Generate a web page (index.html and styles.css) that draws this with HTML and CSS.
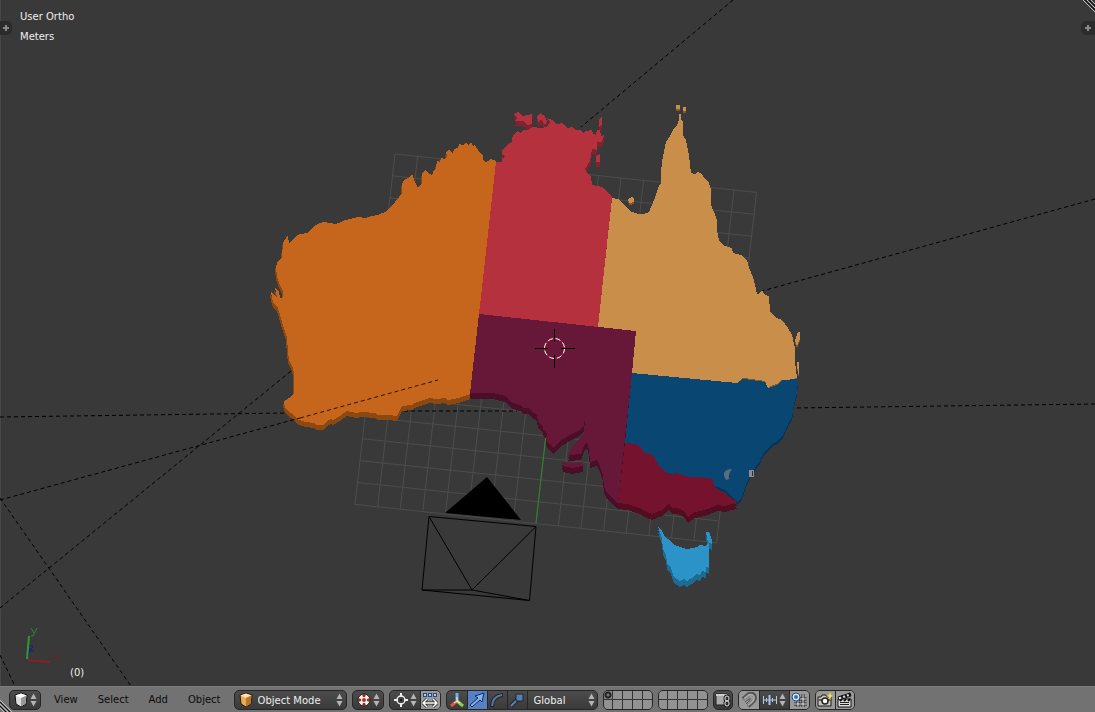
FILE: index.html
```html
<!DOCTYPE html>
<html lang="en">
<head>
    <meta charset="UTF-8">
    <meta name="viewport" content="width=device-width, initial-scale=1.0">
    <title>3D View</title>
    <link rel="stylesheet" href="styles.css">
</head>
<body>
    <svg width="0" height="0" class="defs" aria-hidden="true">
        <symbol id="updown" viewBox="0 0 7 14">
            <path d="M3.5 0.5L6.5 6H.5zM3.5 13.5L6.5 8H.5z" fill="#b4b4b4"/>
        </symbol>
    </svg>

    <main class="view">
        <svg class="scene" viewBox="0 0 1095 686" preserveAspectRatio="xMidYMid slice" role="img" aria-label="Map of Australia">
            <defs>
                <g id="wa">
                    <path d="M496 162L494 160 490 159 488 161 485 162 483 160 483 156 480 153 478 150 475 145 473 146 471 142 468 145 466 143 463 145 459 144 458 148 454 149 453 153 449 150 446 152 447 156 445 159 441 158 440 162 437 161 436 168 434 170 432 175 427 172 425 170 422 173 422 183 418 188 415 182 412 174 409 178 405 179 402 184 402 193 399 197 395 202 390 207 385 212 378 215 372 216 365 218 358 217 350 219 345 220 341 222 335 224 330 223 323 222 318 224 313 227 310 230 307 233 300 234 295 237 289 244 288 235 286 238 283 243 282 257 277 263 276 267 277 277 280 285 283 291 283 297 280 298 279 292 275 287 277 297 271 292 273 302 278 308 282 322 287 338 288 352 289 360 293 368 294 373 294 393 291 397 284 401 285 408 291 413 297 419 305 422 314 423 316 425 323 425 327 421 331 419 333 420 340 416 347 411 356 413 362 412 375 413 377 415 388 415 397 416 402 406 412 405 414 403 420 401 430 398 436 399 445 398 448 400 458 398 470 394 479 314z"/>
                </g>
                <g id="nt">
                    <path d="M496 162L502 162 502 158 505 157 502 153 502 150 505 147 508 144 512 142 512 138 514 134 517 131 521 133 523 130 528 130 533 127 540 128 547 127 550 122 547 118 552 120 557 124 562 123 567 128 572 127 576 130 580 130 583 133 586 131 592 130 593 134 596 135 597 130 600 130 601 136 604 135 602 142 597 142 597 150 592 149 590 161 585 169 588 174 591 177 592 185 602 187 607 191 612 197 598 327 479 314z"/>
                    <path d="M514 114L518 112 522 116 527 115 532 114 532 124 527 125 523 121 515 121 517 118zM537 116L540 113 543 115 545 117 547 121 545 125 541 119 538 122zM599 119L602 117 602 124 599 127zM596 156L600 154 600 162 596 162z"/>
                </g>
                <g id="qld">
                    <path d="M612 198L618 199 623 203 630 211 638 214 644 214 649 212 652 205 655 198 658 188 661 183 661 172 662 162 664 152 666 142 670 136 673 130 677 125 680 118 683 122 683 135 686 140 689 155 691 173 695 174 698 172 702 174 705 179 709 183 711 190 711 205 714 212 717 220 717 230 719 241 725 246 732 248 733 253 741 255 747 260 749 268 753 277 755 285 757 294 760 293 762 290 765 295 769 296 770 312 776 318 782 320 788 328 792 335 795 348 795 362 797 378 787 380 782 380 777 384 773 385 768 388 765 381 752 379 743 378 737 383 632 373 636 331 598 327z"/>
                    <path d="M676 105h4v4h-4zM683 107h3v4h-3zM679 114h2v6h-2zM628 199l4-2 2 1v4l-5 1zM795 340l3-8 2 0v7l-3 7zM797 362h2v10l-1 4z"/>
                </g>
                <g id="sa">
                    <path d="M479 314L636 331 632 373 618 503 612 498 607 493 604 487 603 476 600 466 597 460 590 462 589 450 587 442 584 446 581 454 568 455 572 446 578 441 584 433 585 418 584 425 578 431 570 435 560 441 554 448 548 443 546 439 547 434 543 430 543 426 538 422 537 416 534 413 528 408 523 408 520 405 513 403 505 396 493 393 470 393z"/>
                    <path d="M562 462L570 463 583 462 583 466 572 468 563 466z"/>
                </g>
                <g id="nsw">
                    <path d="M632 373L737 383 743 379 752 380 765 382 768 388 777 385 782 380 798 379 797 393 794 404 792 417 787 426 783 435 778 441 773 443 768 448 763 454 760 461 755 468 751 474 747 482 744 491 740 500 737 502 725 490 700 480 675 476 640 460 625 443z"/>
                </g>
                <g id="vic">
                    <path d="M625 443L636 444 642 448 643 452 653 455 656 461 660 467 666 472 672 475 675 473 690 477 700 477 713 479 714 487 721 491 727 495 737 502 736 503 725 506 717 505 708 509 700 511 695 512 688 517 684 511 678 508 672 508 669 503 665 507 662 510 657 512 652 514 645 511 640 508 627 504 618 503z"/>
                </g>
                <g id="tas">
                    <path d="M658 527L662 531 665 537 668 539 672 543 677 546 683 548 687 549 697 547 700 545 705 546 709 542 709 568 706 567 706 572 702 571 700 575 696 574 693 578 689 579 687 582 684 579 680 581 674 577 671 568 667 563 666 555 663 549 662 538z"/>
                    <path d="M706 532L709 532 712 540 712 544 708 542z"/>
                </g>
            </defs>

            <!-- floor grid, 16 x 16 cells -->
            <path class="grid" transform="matrix(22.6 2.4 -2.5 21.9 395 154)" d="M0 0V16M1 0V16M2 0V16M3 0V16M4 0V16M5 0V16M6 0V16M7 0V16M8 0V16M9 0V16M10 0V16M11 0V16M12 0V16M13 0V16M14 0V16M15 0V16M16 0V16M0 0H16M0 1H16M0 2H16M0 3H16M0 4H16M0 5H16M0 6H16M0 7H16M0 8H16M0 9H16M0 10H16M0 11H16M0 12H16M0 13H16M0 14H16M0 15H16M0 16H16"/>
            <path d="M546 435L536 523" stroke="#2c8a2c" fill="none"/>

            <!-- lamp and camera relation lines -->
            <path class="dash" d="M733 0L581 127M1095 199L762 291M1095 404L793 408M0 417L287 413M404 411H517M0 608L291 371M0 498L131 686M0 655L15 686"/>

            <!-- extruded sides -->
            <g class="land">
                <g fill="#8c4811"><use href="#wa" x="-1" y="3"/><use href="#wa" y="5"/></g>
                <g fill="#812230"><use href="#nt" y="2"/><use href="#nt" y="5"/></g>
                <g fill="#7e5a30"><use href="#qld" y="1"/><use href="#qld" y="2"/></g>
                <g fill="#07355a"><use href="#nsw" y="3"/></g>
                <g fill="#4a0e29"><use href="#sa" y="3"/><use href="#sa" y="6"/></g>
                <g fill="#530c20"><use href="#vic" y="3"/><use href="#vic" y="6"/></g>
                <g fill="#1d6a93"><use href="#tas" y="3"/><use href="#tas" y="6"/></g>
            </g>

            <!-- top faces -->
            <g class="land">
                <use href="#wa" fill="#c6651c"/>
                <use href="#nt" fill="#b5313d"/>
                <use href="#qld" fill="#c98e4a"/>
                <use href="#nsw" fill="#0a4672"/>
                <use href="#sa" fill="#671838"/>
                <use href="#vic" fill="#75122d"/>
                <use href="#tas" fill="#2b93c8"/>
            </g>
            <path d="M732 469q-9 0-8 7l2 4 3-1q-1-5 3-10z" fill="#5b6d7c"/>
            <path d="M749 470h5v7h-5z" fill="#8f8a94"/>
            <path d="M752 471h1v5h-1z" fill="#333"/>

            <path class="dash" d="M0 500L300 418"/>
            <path class="dash" d="M300 418L438 380" stroke-opacity=".8"/>

            <!-- camera -->
            <path d="M487 477L521 520 445 513z"/>
            <path d="M429 516.500L536 526.500 529.500 600.500 422 590zM429 516.500L472 590 536 526.500M422 590L472 590 529.500 600.500" fill="none" stroke="#000"/>

            <!-- 3d cursor -->
            <circle cx="554.500" cy="348.500" r="10" fill="none" stroke="#b02a35"/>
            <circle cx="554.500" cy="348.500" r="10" fill="none" stroke="#fff" stroke-dasharray="5 3"/>
            <path d="M535 348.500h13M561 348.500h14M554.500 329v13M554.500 355v13" stroke="#000"/>

            <!-- axis gizmo -->
            <g fill="none">
                <path d="M27 660L30 648M29 646h4l-3 5h4" stroke="#1c1c86"/>
                <path d="M27 659L29 636" stroke="#2f9a2f" stroke-width="2"/>
                <path d="M31 628l3 5M37 628l-4 8h-2" stroke="#2f8a2f"/>
                <path d="M27 660L50 662" stroke="#8e1f1f" stroke-width="2"/>
                <path d="M54 655l5 6M59 655l-5 6" stroke="#7d2020"/>
            </g>
        </svg>

        <div class="info">
            <div>User Ortho</div>
            <div>Meters</div>
        </div>
        <div class="frame">(0)</div>
        <button class="region left" aria-label="Open tool shelf"><svg width="6" height="6"><path d="M3 0v6M0 3h6" stroke="#8a8a8a" stroke-width="2"/></svg></button>
        <button class="region right" aria-label="Open properties"><svg width="6" height="6"><path d="M3 0v6M0 3h6" stroke="#8a8a8a" stroke-width="2"/></svg></button>
        <svg class="corner top" width="12" height="12"><path d="M0 0L12 12M4 0L12 8M8 0L12 4" stroke="#c0c0c0"/><path d="M2 0L12 10M6 0L12 6" stroke="#111"/></svg>
    </main>

    <footer class="header">
        <svg class="corner bottom" width="12" height="12"><path d="M0 0L12 12M0 4L8 12M0 8L4 12" stroke="#c0c0c0"/><path d="M0 2L10 12M0 6L6 12" stroke="#111"/></svg>

        <button class="box editor" aria-label="Editor type">
            <svg width="16" height="16">
                <path d="M8 1L14 3 13 12 8 15 3 12 2 3z" fill="#ddd" stroke="#111"/>
                <path d="M8 1.500L13.500 3.500 8 6 2.500 3.500z" fill="#fff"/>
                <path d="M8 6L13.500 3.500 12.500 11.500 8 14.500z" fill="#999"/>
            </svg>
            <svg width="7" height="14"><use href="#updown"/></svg>
        </button>

        <nav class="menus">
            <button class="menu">View</button>
            <button class="menu">Select</button>
            <button class="menu">Add</button>
            <button class="menu">Object</button>
        </nav>

        <label class="box mode">
            <svg width="16" height="16">
                <path d="M8 1L14 3 13 12 8 15 3 12 2 3z" fill="#e8a95b" stroke="#2a1a08"/>
                <path d="M8 1.500L13.500 3.500 8 6 2.500 3.500z" fill="#ffe3b8"/>
                <path d="M8 6L13.500 3.500 12.500 11.500 8 14.500z" fill="#b87428"/>
            </svg>
            <select aria-label="Mode"><option>Object Mode</option><option>Edit Mode</option></select>
            <svg width="7" height="14"><use href="#updown"/></svg>
        </label>

        <button class="box" aria-label="Viewport shading">
            <svg width="16" height="16">
                <circle cx="8" cy="8" r="6" fill="#f2eeee" stroke="#1a1a1a"/>
                <path d="M6 2h4l-1 3H7zM6 14h4l-1-3H7zM2 6l3 1v2l-3 1zM14 6l-3 1v2l3 1z" fill="#8c2b22"/>
                <circle cx="8" cy="8" r="2" fill="#a8382c"/>
            </svg>
            <svg width="7" height="14"><use href="#updown"/></svg>
        </button>

        <div class="box group">
            <button class="part pivot" aria-label="Pivot point">
                <svg width="16" height="16">
                    <circle cx="8" cy="8" r="4" fill="none" stroke="#eee" stroke-width="1.500"/>
                    <path d="M8 1v4M8 11v4M1 8h4M11 8h4" stroke="#eee" stroke-width="2"/>
                    <circle cx="8" cy="8" r="1" fill="#111"/>
                </svg>
                <svg width="7" height="14"><use href="#updown"/></svg>
            </button>
            <button class="part light" aria-label="Manipulate center points">
                <svg width="16" height="16">
                    <path d="M1 3h14" stroke="#224a86" stroke-width="4" stroke-dasharray="4 1"/>
                    <path d="M2 3h12" stroke="#a9cdf5" stroke-width="2" stroke-dasharray="2 3"/>
                    <path d="M5 7l-4 4 4 4M11 7l4 4-4 4M1 11h14" fill="none" stroke="#222" stroke-width="3"/>
                    <path d="M5 7l-4 4 4 4M11 7l4 4-4 4M1 11h14" fill="none" stroke="#fff" stroke-width="1.500"/>
                </svg>
            </button>
        </div>

        <div class="box group">
            <button class="part" aria-label="Manipulator">
                <svg width="16" height="16">
                    <path d="M8 9V1" stroke="#6fb0e0" stroke-width="3"/>
                    <path d="M8 9l-6 5" stroke="#e05540" stroke-width="3"/>
                    <path d="M8 9l6 5" stroke="#8fd04a" stroke-width="3"/>
                    <path d="M8 9V5M8 9l-3 2M8 9l3 2" stroke="#f5f5e8"/>
                </svg>
            </button>
            <button class="part active" aria-label="Translate">
                <svg width="16" height="16"><path d="M1 13L9 6 6 4 15 1 13 10 11 8 3 15z" fill="#7fb2f0" stroke="#0f2b58"/></svg>
            </button>
            <button class="part" aria-label="Rotate">
                <svg width="16" height="16"><path d="M3 15Q3 4 14 3" fill="none" stroke="#1b2738" stroke-width="4"/><path d="M3 14Q4 4 13 3" fill="none" stroke="#5c7899" stroke-width="2"/></svg>
            </button>
            <button class="part" aria-label="Scale">
                <svg width="16" height="16"><path d="M2 14L9 7" stroke="#1b2738" stroke-width="4"/><path d="M2 14L9 7" stroke="#6383a8" stroke-width="2"/><path d="M7 2h7v7H7z" fill="#5b7ea8" stroke="#1b2738"/></svg>
            </button>
            <label class="part orientation">
                <select aria-label="Transform orientation"><option>Global</option><option>Local</option></select>
                <svg width="7" height="14"><use href="#updown"/></svg>
            </label>
        </div>

        <div class="layers">
            <button aria-label="Layer 1" class="used"></button><button aria-label="Layer 2"></button><button aria-label="Layer 3"></button><button aria-label="Layer 4"></button><button aria-label="Layer 5"></button>
            <button aria-label="Layer 11"></button><button aria-label="Layer 12"></button><button aria-label="Layer 13"></button><button aria-label="Layer 14"></button><button aria-label="Layer 15"></button>
        </div>
        <div class="layers">
            <button aria-label="Layer 6"></button><button aria-label="Layer 7"></button><button aria-label="Layer 8"></button><button aria-label="Layer 9"></button><button aria-label="Layer 10"></button>
            <button aria-label="Layer 16"></button><button aria-label="Layer 17"></button><button aria-label="Layer 18"></button><button aria-label="Layer 19"></button><button aria-label="Layer 20"></button>
        </div>

        <button class="box lock" aria-label="Lock camera and layers">
            <svg width="16" height="16">
                <path d="M1 2h11v11H1z" fill="#aaa" stroke="#222"/>
                <path d="M1 2h11v2H1z" fill="#ccc"/>
                <rect x="10" y="4" width="4" height="5" rx="2" fill="none" stroke="#222" stroke-width="3"/>
                <rect x="10" y="9" width="4" height="5" rx="2" fill="none" stroke="#222" stroke-width="3"/>
                <rect x="10" y="4" width="4" height="5" rx="2" fill="none" stroke="#e8e8e8"/>
                <rect x="10" y="9" width="4" height="5" rx="2" fill="none" stroke="#e8e8e8"/>
            </svg>
        </button>

        <div class="box group">
            <button class="part light" aria-label="Snap">
                <svg width="16" height="16">
                    <path d="M2 7L8 2Q14 1 14 6 14 9 7 14" fill="none" stroke="#555" stroke-width="4"/>
                    <path d="M5 12L9 8Q10 6 8 7L4 10" fill="none" stroke="#555"/>
                    <path d="M3 7L8 3Q13 2 13 6 13 9 7 13" fill="none" stroke="#a8a8a8" stroke-width="2"/>
                </svg>
            </button>
            <button class="part snap" aria-label="Snap element">
                <svg width="16" height="16">
                    <path d="M1.500 4v8M4.500 6v4M10.500 6v4M14.500 4v8M1 8h14" stroke="#b9c6d6"/>
                    <path d="M7.500 3v10" stroke="#9cc4f5" stroke-width="2"/>
                </svg>
                <svg width="7" height="14"><use href="#updown"/></svg>
            </button>
            <button class="part light" aria-label="Snap target">
                <svg width="16" height="16">
                    <path d="M7 3v12M12 2v13M3 12h13M7 7h9" stroke="#222" stroke-width="3"/>
                    <path d="M7 8v7M12 2v13M3 12h13M9 7h7" stroke="#eee"/>
                    <circle cx="5" cy="5" r="4" fill="#d9e8fa" stroke="#1f4f8f"/>
                    <circle cx="5" cy="5" r="2" fill="#3d6fb0"/>
                </svg>
            </button>
        </div>

        <div class="box group render">
            <button class="part light" aria-label="Render still">
                <svg width="16" height="16">
                    <path d="M1 5h3l1-2h4l1 2h4v9H1z" fill="#c9c5bc" stroke="#1a1a1a"/>
                    <path d="M1 7h13v2H1z" fill="#6b5a45"/>
                    <circle cx="8" cy="9" r="3" fill="#fff" stroke="#222" stroke-width="1.500"/>
                    <path d="M13 0l1 3 2 1-2 1-1 3-1-3-3-1 3-1z" fill="#f4e04e"/>
                </svg>
            </button>
            <button class="part light" aria-label="Render animation">
                <svg width="16" height="16">
                    <path d="M1 7h13v8H1z" fill="#ddd" stroke="#111"/>
                    <path d="M1 5L13 1l1 3L2 8z" fill="#eee" stroke="#111"/>
                    <path d="M4 4l2 2M8 3l2 2M12 1l1 3M3 9l2-2M7 9l2-2M11 9l2-2" stroke="#111" stroke-width="2"/>
                    <path d="M3 10.500h9M3 12.500h9" stroke="#222"/>
                </svg>
            </button>
        </div>
    </footer>
</body>
</html>
```

FILE: styles.css
```css
* {
    box-sizing: border-box;
}
body {
    margin: 0;
    height: 100vh;
    display: flex;
    flex-direction: column;
    overflow: hidden;
    background: #393939;
    color: #eee;
    font: 10px/20px "DejaVu Sans", Verdana, sans-serif;
}
button,
select {
    font: inherit;
    color: inherit;
    background: none;
    border: 0;
    margin: 0;
    padding: 0;
}
svg {
    display: block;
    flex: none;
}
.defs {
    position: absolute;
}
.view {
    flex: 1;
    min-height: 0;
    position: relative;
    background: #393939;
    box-shadow: inset 1px 0 #484848;
}
.scene {
    width: 100%;
    height: 100%;
}
.grid {
    fill: none;
    stroke: #4d4d4d;
    vector-effect: non-scaling-stroke;
}
.dash {
    fill: none;
    stroke: #000;
    stroke-dasharray: 4 3;
}
.land {
    shape-rendering: crispEdges;
}
.info {
    position: absolute;
    left: 20px;
    top: 7px;
}
.frame {
    position: absolute;
    left: 70px;
    bottom: 3px;
}
.region {
    position: absolute;
    top: 21px;
    height: 14px;
    width: 12px;
    padding: 0 3px;
    background: #2b2b2b;
}
.region.left {
    left: 0;
    border-radius: 0 5px 5px 0;
}
.region.right {
    right: 0;
    width: 14px;
    padding: 0 4px;
    border-radius: 5px 0 0 5px;
}
.corner {
    position: absolute;
}
.corner.top {
    top: 0;
    right: 0;
}
.corner.bottom {
    left: 0;
    bottom: 0;
}

/* bottom bar */
.header {
    position: relative;
    flex: none;
    display: flex;
    align-items: center;
    gap: 5px;
    height: 26px;
    padding-left: 9px;
    background: #727272;
    border-top: 1px solid #7d7d7d;
}
.box {
    display: flex;
    align-items: center;
    flex: none;
    height: 20px;
    padding: 0 3px;
    gap: 1px;
    border: 1px solid #262626;
    border-radius: 5px;
    background: linear-gradient(#4c4c4c, #3a3a3a);
}
.menus {
    display: flex;
    gap: 20px;
    margin: 0 8px;
    color: #0c0c0c;
}
.mode {
    width: 113px;
}
select {
    appearance: none;
    flex: 1;
    min-width: 0;
    height: 18px;
    padding-left: 3px;
}
.group {
    padding: 0;
    gap: 0;
    overflow: hidden;
}
.part {
    display: flex;
    align-items: center;
    justify-content: center;
    gap: 1px;
    width: 20px;
    height: 18px;
}
.part + .part {
    border-left: 1px solid #262626;
}
.pivot,
.snap {
    width: 30px;
}
.light {
    background: #999;
}
.active {
    background: #5680c2;
}
.orientation {
    width: 70px;
    padding: 0 2px 0 3px;
}
.render .part {
    width: 19px;
}
.layers {
    display: grid;
    grid-template-columns: repeat(5, 1fr);
    gap: 1px;
    flex: none;
    width: 50px;
    height: 20px;
    border: 1px solid #262626;
    border-radius: 5px;
    overflow: hidden;
    background: #333;
}
.layers button {
    background: #929292;
}
.layers .used {
    background: radial-gradient(circle, #777 1px, #222 2px, #222 3px, #888 4px);
}
.lock {
    width: 20px;
    padding: 0 1px;
}
```
